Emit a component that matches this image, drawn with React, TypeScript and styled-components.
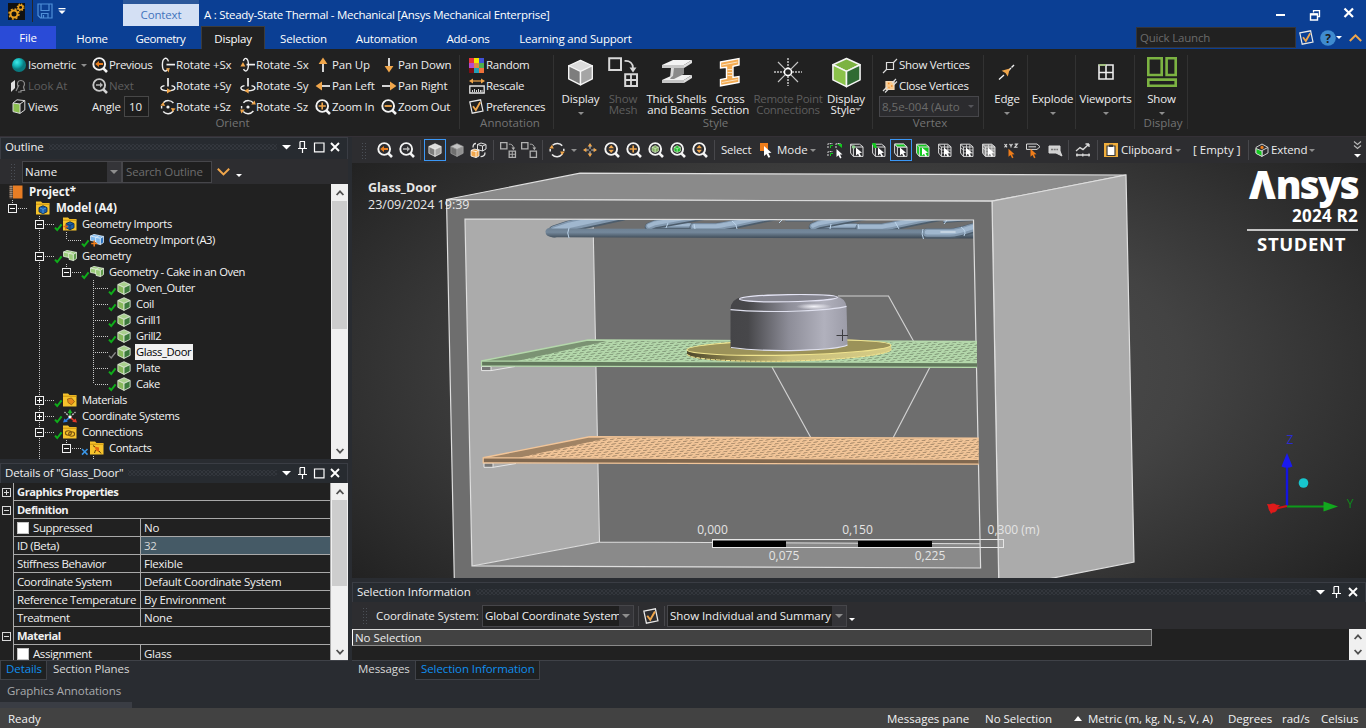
import React from 'react';
import styled, { createGlobalStyle, css } from 'styled-components';

const Global = createGlobalStyle`
  *{box-sizing:border-box}
  body{margin:0;background:#292c31;overflow:hidden}
`;
const UI = '"Open Sans","Noto Sans",sans-serif';

/* ---------- shared pieces ---------- */
const Page = styled.div`
  width:1366px;height:728px;display:flex;flex-direction:column;overflow:hidden;
  font:11.5px/16px ${UI};color:#ececec;background:#292c31;white-space:nowrap;cursor:default;
`;
const Svg = styled.svg`flex:none;display:block;overflow:visible;`;
const Text = styled.span<{ $w?: number; $ls?: number; $b?: boolean }>`
  flex:none;display:block;
  ${p => p.$w && css`width:${p.$w}px;`}
  letter-spacing:${p => p.$ls || 0}px;
  ${p => p.$b && css`font-weight:700;`}
`;
const Space = styled.div<{ $w?: number }>`${p => (p.$w ? css`width:${p.$w}px;flex:none;` : css`flex:1;`)}`;
const Caret = styled.i<{ $c?: string; $s?: number }>`
  flex:none;display:block;width:0;height:0;border:${p => p.$s || 3}px solid transparent;border-bottom:0;
  border-top:${p => (p.$s || 3) + 0.5}px solid ${p => p.$c || '#8e8e8e'};
`;

/* ---------- icons ---------- */
const OR = '#f0a64b';
type LensKind = 'prev' | 'next' | 'plus' | 'minus' | 'ud' | 'cube' | 'green';
const Lens = ({ k, dim }: { k: LensKind; dim?: boolean }) => (
  <Svg width="16" height="16" fill="none">
    <circle cx="7.2" cy="7" r="5.9" stroke={dim ? '#c9c9c9' : '#f4f4f4'} strokeWidth="1.9" />
    <path d="M11.3 11.3 L15 15" stroke={dim ? '#d5d5d5' : '#f4f4f4'} strokeWidth="2.6" />
    {k === 'prev' && <path d="M3.2 7 L7 4 V6 H11 V8 H7 V10 Z" fill="#e87d1e" />}
    {k === 'next' && <path d="M11 7 L8 4.2 V6.3 H4 V7.7 H8 V9.8 Z" fill="#b5b5b5" />}
    {k === 'plus' && <path d="M7.2 3.4 V10.6 M3.6 7 H10.8" stroke={OR} strokeWidth="1.6" />}
    {k === 'minus' && <path d="M3.6 7 H10.8" stroke={OR} strokeWidth="1.8" />}
    {k === 'ud' && <path d="M7.2 3 L10 6.3 H4.4 Z M7.2 11 L10 7.8 H4.4 Z" fill={OR} />}
    {(k === 'cube' || k === 'green') && (
      <>
        <path d="M7.2 3.6 L10.4 5.2 V9 L7.2 10.6 L4 9 V5.2 Z" fill={k === 'green' ? '#19c22a' : '#7fae5c'} stroke="#cfe3bf" strokeWidth=".7" />
        <path d="M4 5.2 L7.2 6.6 L10.4 5.2 M7.2 6.6 V10.6" stroke="#dcebd0" strokeWidth=".7" />
      </>
    )}
  </Svg>
);
const Cube = ({ s = 14, t = '#dcdcdc', l = '#7d7d7d', r = '#a5a5a5', e = '#f5f5f5', sw = 0.8 }) => (
  <Svg width={s} height={s} viewBox="0 0 16 16" strokeLinejoin="round" stroke={e} strokeWidth={sw}>
    <path d="M8 .8 L15 4 L8 7.4 L1 4 Z" fill={t} />
    <path d="M1 4 L8 7.4 V15.3 L1 11.8 Z" fill={l} />
    <path d="M15 4 L8 7.4 V15.3 L15 11.8 Z" fill={r} />
  </Svg>
);
const BodyCube = () => <Cube s={14} t="#a9d08e" l="#86b85a" r="#3c7a3c" e="#dfe9d8" sw={1} />;
const RotAxis = ({ k, neg }: { k: 'x' | 'y' | 'z'; neg?: boolean }) => (
  <Svg width="16" height="16" fill="none" stroke="#f0f0f0" strokeWidth="1.4">
    {k === 'x' && (
      <>
        <path d={neg ? 'M3.4 4 C4.6 -.2 8.4 .4 8.4 7.6 C8.4 14.8 5 15.4 3.6 12' : 'M8.4 4.4 C7.2 -.6 2.4 .4 2.4 7.8 C2.4 15 6.4 15.6 8 11.4'} />
        <path d="M6.5 7.6 H15" strokeWidth="1.7" />
        <path d={neg ? 'M.4 9.5 L3 5 L5.4 9.5 Z' : 'M6 11.5 L8.6 15.6 L9.8 11 Z'} fill={OR} stroke="none" />
      </>
    )}
    {k === 'y' && (
      <>
        <path d="M4.5 7.6 C-1 8.5 -.5 12.5 8 12.8 C16.5 12.5 16.5 8.5 11.5 7.6" />
        <path d="M8 0 V8.6" strokeWidth="1.7" />
        <path d={neg ? 'M8.6 10.2 L4.4 12.8 L8.6 15.6 Z' : 'M7 10.2 L11.4 12.8 L7 15.6 Z'} fill={OR} stroke="none" />
      </>
    )}
    {k === 'z' && (
      <>
        <path d="M3.4 3.8 C6 .8 11 .8 13.4 4 M13.4 12 C10.6 15.4 6 15.6 3.2 12.6 M1.6 9.5 V7" />
        <circle cx="8" cy="8" r="1.6" fill="#f0f0f0" stroke="none" />
        <path d={neg ? 'M11.2 5.6 H15.8 L14.6 1.6 Z' : 'M.4 6.6 L3.4 3 L5 7 Z'} fill={OR} stroke="none" />
        <path d={neg ? 'M4.8 10.6 H.2 L1.4 14.6 Z' : 'M15.6 9.4 L12.6 13 L11 9 Z'} fill={OR} stroke="none" />
      </>
    )}
  </Svg>
);
const Arrow = ({ a }: { a: number }) => (
  <Svg width="16" height="16">
    <g transform={`rotate(${a} 8 8)`}>
      <path d="M8 6.5 V15" stroke="#f5f5f5" strokeWidth="1.7" />
      <path d="M8 .6 L12.4 7 H3.6 Z" fill={OR} />
    </g>
  </Svg>
);
const Check = ({ s = 15 }) => (
  <Svg width={s} height={s} viewBox="0 0 15 15" fill="none">
    <path d="M.8 2.9 L11.6 .8 L14 12 L3.2 14.2 Z" stroke="#e8e8e8" strokeWidth="1.2" />
    <path d="M4 7.3 L6.8 11 L11.2 3.2" stroke={OR} strokeWidth="1.8" />
  </Svg>
);
const Palette = () => {
  const c = ['#e8343a', '#f3e800', '#3f51d8', '#b44bd0', '#e08a45', '#4caf50', '#7d0f14', '#20a0b8', '#f0713a'];
  return (
    <Svg width="15" height="15" shapeRendering="crispEdges">
      {c.map((f, n) => <rect key={f} x={(n % 3) * 5} y={Math.floor(n / 3) * 5} width="5" height="5" fill={f} />)}
    </Svg>
  );
};
const RescaleIcon = () => (
  <Svg width="16" height="16" fill="none">
    <path d="M2 3 H14" stroke={OR} strokeWidth="1.2" />
    <path d="M0 3 L4 .5 V5.5 Z M16 3 L12 .5 V5.5 Z" fill={OR} />
    <path d="M.8 8 H15.2 V15 H.8 Z" stroke="#e6e6e6" strokeWidth="1.3" />
    <path d="M3.5 14 V12 M5.5 14 V11 M7.5 14 V12 M9.5 14 V11 M11.5 14 V12 M13 14 V12" stroke="#e6e6e6" strokeWidth=".9" />
  </Svg>
);
const LookAtIcon = () => (
  <Svg width="16" height="14" fill="none" stroke="#8c8c8c" strokeWidth="1.2">
    <path d="M1 4 L5 1 V9 L1 13 Z" fill="#e0e0e0" stroke="none" />
    <path d="M8 8 C6.5 4 8 1.5 11 1.5 C14.5 1.5 15.5 5 13.5 8 L14.5 11.5 H11 V13 H8 M6 12 L9 6" />
  </Svg>
);
const ViewsIcon = () => (
  <Svg width="14" height="15" fill="none" stroke="#d8d8d8" strokeWidth="1">
    <path d="M1 4 L8 5 V14.4 L1 12.6 Z" fill="#8bbf4f" />
    <path d="M1 4 L5 .8 L12.8 1.6 L8 5 M12.8 1.6 V11 L8 14.4" />
  </Svg>
);
const Dim2 = ({ c = '#d8d8d8', s = 30, flip = false }) => (
  <Svg width={s} height={s} viewBox="0 0 30 30" fill="none" stroke={c}>
    <path d="M1.2 1.2 H13 V13 H1.2 Z" strokeWidth={s > 20 ? 2 : 2.4} />
    <path d="M17.2 17.2 H29 V29 H17.2 Z" strokeWidth={s > 20 ? 2 : 2.4} />
    {!flip && <path d="M23 17 V29 M17 23 H29" strokeWidth="1.8" />}
    <path d="M16.5 4 C22 3.5 25 6.5 25 11" strokeWidth="1.7" />
    <path d="M21.5 10.5 H28.5 L25 15.5 Z" fill={c} stroke="none" />
  </Svg>
);
const BeamIcon = () => (
  <Svg width="30" height="24">
    <path d="M0 20 L11 15 H30 L22 20 Z" fill="#f0f0f0" />
    <path d="M0 20 H22 V23 H0 Z" fill="#c4c4c4" />
    <path d="M22 20 L30 15 V18 L22 23 Z" fill="#dcdcdc" />
    <path d="M10 8 H22 V14 L12 19 H8 L10 16 Z" fill="#8a8a8a" />
    <path d="M9 8 H12 L11 16 L8 18 Z" fill="#d8d8d8" />
    <path d="M0 5 L11 0 H30 L22 5 Z" fill="#f4f4f4" />
    <path d="M0 5 H22 V8 H0 Z" fill="#c9c9c9" />
    <path d="M22 5 L30 0 V3 L22 8 Z" fill="#dedede" />
  </Svg>
);
const CrossSectionIcon = () => (
  <Svg width="20" height="30">
    <path d="M.5 5 L19 1.5 V8 L13 9.4 V20.4 L19 19.5 V25.5 L.5 28.8 V22.5 L6.5 21.4 V10.2 L.5 11 Z" fill="#f3ab52" stroke="#fff" strokeWidth="1.4" />
    <path d="M2 8 L17.500 5 M7.5 12.5 H12 M7.5 15.5 H12 M7.5 18.5 H12 M2 25.5 L17.500 22.5" stroke="#fbe3c2" strokeWidth="1" />
  </Svg>
);
const BurstIcon = () => (
  <Svg width="28" height="28" fill="none" stroke="#c4c4c4" strokeWidth="1.2">
    <circle cx="14" cy="14" r="3.6" stroke="#fff" strokeWidth="1.6" />
    <path d="M14 0 V10 M14 18 V28 M0 14 H10 M18 14 H28" strokeDasharray="2 1" strokeWidth="1.5" />
    <path d="M4 4 L11.3 11.3 M24 4 L16.7 11.3 M4 24 L11.3 16.7 M24 24 L16.7 16.7" />
  </Svg>
);
const VertexIcon = ({ close }: { close?: boolean }) => (
  <Svg width="15" height="15" fill="none" stroke="#dcdcdc" strokeWidth="1.2">
    {close ? (
      <>
        <path d="M3 3.5 H11 V11.5 H3 Z" fill="#f9c98d" stroke="#f7d9b4" />
        <path d="M0 13 L4 9 M2 14.5 L5.5 11 M9 5 L13 1 M10.500 7 L14 3.500" />
        <path d="M5 5.5 h1.5 M8 8 h1.5 M5.5 9.5 h1" stroke="#f08c2a" strokeWidth="1.4" />
      </>
    ) : (
      <>
        <path d="M3.5 4.5 H10.5 V11.5 H3.5 Z" />
        <path d="M10.5 4.5 L14 1 M3.5 11.5 L0 15" />
      </>
    )}
  </Svg>
);
const EdgeIcon = () => (
  <Svg width="16" height="16">
    <path d="M0 15.5 L5 11 M9.5 6.5 L12 4" stroke="#f0f0f0" strokeWidth="1.4" />
    <path d="M12.5 3.5 L15 1" stroke="#f0f0f0" strokeWidth="1.4" />
    <path d="M2.6 6.8 L10.8 4.6 L8.8 12.6 L6.5 9 Z" fill={OR} />
  </Svg>
);
const ViewportsIcon = () => (
  <Svg width="16" height="16" fill="none" stroke="#ececec" strokeWidth="1.6">
    <path d="M1 1 H15 V15 H1 Z M8 1 V15 M1 8.5 H15" />
    <path d="M1 1 H8" stroke="#8bc34a" strokeWidth="1" />
  </Svg>
);
const ShowIcon = () => (
  <Svg width="30" height="30" fill="none" stroke="#7cb342" strokeWidth="2.6">
    <path d="M1.3 1.3 H14.7 V18 H1.3 Z M19.6 1.3 H28.7 V18 H19.6 Z M1.3 22.6 H28.7 V28.7 H1.3 Z" />
  </Svg>
);
const Gears = () => (
  <Svg width="17" height="17">
    <rect width="17" height="17" fill="#111" />
    <circle cx="6" cy="11" r="3.5" fill="none" stroke="#e8a020" strokeWidth="2" />
    <circle cx="6" cy="11" r="5" fill="none" stroke="#e8a020" strokeWidth="1.4" strokeDasharray="2 1.93" />
    <circle cx="12.6" cy="4.4" r="2.2" fill="none" stroke="#e8a020" strokeWidth="1.5" />
    <circle cx="12.6" cy="4.4" r="3.3" fill="none" stroke="#e8a020" strokeWidth="1.2" strokeDasharray="1.4 1.2" />
  </Svg>
);
const Floppy = () => (
  <Svg width="16" height="16" fill="none" stroke="#4f8fd8" strokeWidth="1.2">
    <path d="M1 1 H15 V15 H3.5 L1 12.5 Z M4 1 V7.5 H12 V1 M4.5 15 V10.5 H11 V15 M6.5 12 V15" />
  </Svg>
);
const RingIcon = () => (
  <Svg width="16" height="16" fill="none" stroke="#ededed" strokeWidth="1.5">
    <path d="M3.6 3.2 C6.4 .6 11 .8 13.2 3.8 M13.4 12 C10.6 15.4 6 15.6 3 12.4 M1.2 9.4 V7 M14.8 9 V6.8" />
    <path d="M.2 6.400 L3 2.800 L4.800 6.600 Z M15.800 9.600 L13 13.200 L11.200 9.400 Z" fill={OR} stroke="none" />
  </Svg>
);
const PanIcon = () => (
  <Svg width="14" height="14" fill={OR}>
    <path d="M7 0 L9.3 3.4 H4.7 Z M7 14 L9.3 10.6 H4.7 Z M0 7 L3.4 4.7 V9.3 Z M14 7 L10.6 4.7 V9.3 Z" />
    <path d="M7 3 V5.8 M7 8.2 V11 M3 7 H5.8 M8.2 7 H11" stroke="#bdbdbd" strokeWidth="1.2" />
  </Svg>
);
const Cursor = 'M0 0 L0 8 L2 6.3 L3.6 9.4 L5 8.7 L3.5 5.6 L6 5.4 Z';
type SelKind = 'multi' | 'vert' | 'edge' | 'face' | 'body' | 'node' | 'elf' | 'el' | 'xyz' | 'tag' | 'note' | 'trend';
const SelIcon = ({ k }: { k: SelKind }) => {
  const box = ['vert', 'edge', 'face', 'body', 'node', 'elf', 'el'].includes(k);
  return (
    <Svg width="14" height="14" fill="none" stroke="#dadada" strokeWidth="1">
      {box && (
        <>
          <path d="M.6 1.2 H9.6 L13 3.8 V13.4 H3.4 L.6 10 Z" fill={k === 'body' ? '#12c81e' : k === 'el' ? '#8d8d8d' : '#2d2d30'} />
          <path d="M3.4 4 H13 M3.4 4 V13.4" />
          <path d="M.6 1.2 L3.4 4" stroke={k === 'edge' ? '#12c81e' : '#dadada'} />
        </>
      )}
      {k === 'face' && <path d="M.6 1 H9.6 L13 4 H3.4 Z" fill="#12c81e" />}
      {k === 'edge' && <path d="M0 0 H3.4 L5 5 H2 Z" fill="#12c81e" stroke="none" />}
      {k === 'vert' && <circle cx="3.6" cy="4" r="1.8" fill="#8fd08f" stroke="none" />}
      {(k === 'node' || k === 'elf' || k === 'el') && <path d="M3.4 7 H13 M3.4 10 H13 M6.5 1.4 V13 M9.8 1.4 V13 M1 5 L3.4 7" strokeWidth=".8" />}
      {k === 'multi' && (
        <>
          <path d="M0 5 V.6 H5 M8 5 V.6 H13 M0 13 V8.6 H5" strokeDasharray="2 1" />
          <path d="M2.5 5 v-2.5 h2.5 M2.5 13 v-2.5 h2.5" stroke="#12c81e" />
          <path d="M9 1 H14 V5 Z" fill="#12c81e" stroke="none" />
        </>
      )}
      {k === 'note' && <path d="M1 3 H12 V8 L14 13 L8 10 H1 Z" fill="#d0d0d0" />}
      {k === 'note' && <path d="M3 6.5 H10" stroke="#777" strokeWidth="1.6" strokeDasharray="2 .7" />}
      {k === 'trend' && <path d="M0 8 L4 4.6 L7 6.6 L13 1 M13 1 H9.5 M13 1 V4 M0 12 H14 M1 10.4 V13.6 M6.8 10.4 V13.6 M13 10.4 V13.6" strokeWidth="1.3" />}
      {k === 'tag' && <path d="M.5 1 H11 L14 3.7 L11 6.4 H.5 Z M2.5 3.8 H10" />}
      {k === 'xyz' && <path d="M.5 1 L3 4.4 M3 1 L.5 4.4 M5.5 1 L7 2.6 L8.5 1 M7 2.6 V4.5 M10.7 1.1 H13.4 L10.7 4.3 H13.6" strokeWidth="1.1" />}
      {k !== 'note' && k !== 'trend' && (
        <path d={Cursor} transform={k === 'multi' ? 'translate(8.5 6)' : k === 'xyz' || k === 'tag' ? 'translate(4.5 5.8)' : 'translate(6 4.4)'} fill={k === 'xyz' || k === 'tag' ? '#ef7d1a' : '#fff'} stroke="none" />
      )}
    </Svg>
  );
};

/* ---------- title bar ---------- */
const Top = styled.header`height:49px;flex:none;background:#0b3f94;display:flex;flex-direction:column;`;
const TitleRow = styled.div`height:26px;display:flex;align-items:flex-start;padding-left:8px;color:#fff;`;
const PadTop = styled.div<{ $t: number; $l?: number }>`padding:${p => p.$t}px 0 0 ${p => p.$l || 0}px;flex:none;`;
const ContextTab = styled.div`
  width:76px;height:26px;border-top:4px solid #2b579a;background:#d4e0f4;color:#4373bd;
  line-height:22px;text-align:center;letter-spacing:-.15px;
`;
const TitleDivider = styled.div`width:1px;height:22px;background:#26262a;margin:0 4px 0 7px;`;
const Tabs = styled.nav`height:23px;display:flex;`;
const Tab = styled.div<{ $w: number; $k?: 'file' | 'on'; $ml?: number; $ls?: number }>`
  width:${p => p.$w}px;margin-left:${p => p.$ml || 0}px;height:23px;line-height:25px;text-align:center;color:#fff;
  letter-spacing:${p => p.$ls ?? -0.2}px;
  ${p => p.$k === 'file' && css`background:#2a4bd7;line-height:24px;`}
  ${p => p.$k === 'on' && css`background:#212121;border:1px solid #3c3c3c;border-bottom:0;line-height:24px;`}
`;
const Quick = styled.div`
  width:160px;height:21px;margin-top:1px;background:#212121;border:1px solid #34353a;color:#6b6b6b;padding-left:3px;line-height:20px;letter-spacing:-.2px;
`;
const RightTools = styled.div`display:flex;align-items:center;height:23px;padding-left:3px;width:70px;`;

/* ---------- ribbon ---------- */
const Ribbon = styled.section`height:88px;flex:none;background:#212121;display:flex;border-bottom:1px solid #343036;padding-top:6px;`;
const Group = styled.div<{ $w: number; $pl?: number }>`
  width:${p => p.$w}px;height:74px;flex:none;border-right:1px solid #323232;display:flex;flex-direction:column;padding-left:${p => p.$pl || 0}px;
`;
const GroupBody = styled.div`display:flex;height:62px;`;
const GroupName = styled.div<{ $c?: number; $r?: number }>`
  height:12px;line-height:12px;text-align:center;color:#747474;padding-left:${p => p.$c || 0}px;padding-right:${p => p.$r || 0}px;
`;
const Col = styled.div<{ $w: number }>`width:${p => p.$w}px;flex:none;display:flex;flex-direction:column;`;
const Cmd = styled.div<{ $dim?: boolean }>`height:21px;display:flex;align-items:center;color:${p => (p.$dim ? '#5e5e5e' : '#ededed')};`;
const IconSlot = styled.div<{ $w?: number }>`width:${p => p.$w || 16}px;flex:none;display:flex;justify-content:flex-start;`;
const AngleBox = styled.div`width:25px;height:21px;border:1px solid #474747;background:#1d1d1d;line-height:20px;padding-left:4px;`;
const Big = styled.div<{ $w: number; $dim?: boolean }>`
  width:${p => p.$w}px;flex:none;display:flex;flex-direction:column;align-items:center;color:${p => (p.$dim ? '#5e5e5e' : '#ededed')};
`;
const BigIcon = styled.div`height:34px;margin-bottom:4px;width:100%;display:flex;align-items:center;justify-content:center;`;
const BigLine = styled.div<{ $ls?: number; $drop?: boolean }>`
  height:11px;line-height:11px;display:flex;align-items:${p => (p.$drop ? 'flex-end' : 'center')};letter-spacing:${p => p.$ls ?? -0.15}px;
`;
const Combo = styled.div<{ $w: number; $h?: number; $off?: boolean }>`
  width:${p => p.$w}px;height:${p => p.$h || 22}px;flex:none;display:flex;border:1px solid #46464a;background:${p => (p.$off ? '#2b2b2e' : '#1f1f1f')};
  color:${p => (p.$off ? '#6b6b6b' : '#f0f0f0')};line-height:${p => (p.$h || 22) - 2}px;padding-left:2px;
`;
const ComboText = styled.span<{ $ls?: number }>`flex:1;overflow:hidden;letter-spacing:${p => p.$ls || 0}px;`;
const ComboBtn = styled.span<{ $off?: boolean }>`width:14px;flex:none;display:flex;align-items:center;justify-content:center;background:${p => (p.$off ? 'transparent' : '#343438')};`;

const Item = ({ i, t, dim, ls = -0.15, w }: { i: React.ReactNode; t: string; dim?: boolean; ls?: number; w?: number }) => (
  <Cmd $dim={dim}>
    <IconSlot $w={w}>{i}</IconSlot>
    <Text $ls={ls}>{t}</Text>
  </Cmd>
);
const BigBtn = ({ w, icon, a, b, dim, ls, caret }: { w: number; icon?: React.ReactNode; a: string; b?: string; dim?: boolean; ls?: number; caret?: boolean }) => (
  <Big $w={w} $dim={dim}>
    <BigIcon>{icon}</BigIcon>
    <BigLine $ls={ls}>{a}</BigLine>
    <BigLine $ls={ls} $drop={!b}>{b}{caret && <Caret />}</BigLine>
  </Big>
);

const RibbonBar = () => (
  <Ribbon>
    <Group $w={460} $pl={10}>
      <GroupBody>
        <Col $w={82}>
          <Cmd>
            <Space $w={2} />
            <IconSlot>
              <Svg width="14" height="14">
                <defs><radialGradient id="ball" cx=".35" cy=".3"><stop offset="0" stopColor="#3fe8e8" /><stop offset=".6" stopColor="#14b5b8" /><stop offset="1" stopColor="#0a7a80" /></radialGradient></defs>
                <circle cx="7" cy="7" r="7" fill="url(#ball)" />
              </Svg>
            </IconSlot>
            <Text $w={53} $ls={-0.2}>Isometric</Text><Caret />
          </Cmd>
          <Item w={18} i={<LookAtIcon />} t="Look At" dim />
          <Cmd><Space $w={2} /><IconSlot><ViewsIcon /></IconSlot><Text $ls={-0.1}>Views</Text></Cmd>
        </Col>
        <Col $w={68}>
          <Item w={17} i={<Lens k="prev" />} t="Previous" ls={-0.35} />
          <Item w={17} i={<Lens k="next" dim />} t="Next" dim />
          <Cmd><Text $w={32} $ls={-0.25}>Angle</Text><AngleBox>10</AngleBox></Cmd>
        </Col>
        <Col $w={80}>
          <Item i={<RotAxis k="x" />} t="Rotate +Sx" />
          <Item i={<RotAxis k="y" />} t="Rotate +Sy" />
          <Item i={<RotAxis k="z" />} t="Rotate +Sz" />
        </Col>
        <Col $w={75}>
          <Item i={<RotAxis k="x" neg />} t="Rotate -Sx" />
          <Item i={<RotAxis k="y" neg />} t="Rotate -Sy" />
          <Item i={<RotAxis k="z" neg />} t="Rotate -Sz" />
        </Col>
        <Col $w={66}>
          <Item w={17} i={<Arrow a={0} />} t="Pan Up" />
          <Item w={17} i={<Arrow a={-90} />} t="Pan Left" />
          <Item w={17} i={<Lens k="plus" />} t="Zoom In" ls={-0.3} />
        </Col>
        <Col $w={75}>
          <Item w={17} i={<Arrow a={180} />} t="Pan Down" />
          <Item w={17} i={<Arrow a={90} />} t="Pan Right" />
          <Item w={17} i={<Lens k="minus" />} t="Zoom Out" ls={-0.25} />
        </Col>
      </GroupBody>
      <GroupName $r={4}>Orient</GroupName>
    </Group>
    <Group $w={94} $pl={9}>
      <GroupBody>
        <Col $w={84}>
          <Item w={17} i={<Palette />} t="Random" ls={-0.3} />
          <Item w={17} i={<RescaleIcon />} t="Rescale" ls={-0.3} />
          <Item w={17} i={<Check />} t="Preferences" ls={-0.45} />
        </Col>
      </GroupBody>
      <GroupName $r={2}>Annotation</GroupName>
    </Group>
    <Group $w={319} $pl={5}>
      <GroupBody>
        <BigBtn w={43} icon={<Cube s={27} />} a="Display" caret />
        <BigBtn w={42} icon={<Dim2 />} a="Show" b="Mesh" dim />
        <BigBtn w={65} icon={<BeamIcon />} a="Thick Shells" b="and Beams" />
        <BigBtn w={42} icon={<CrossSectionIcon />} a="Cross" b="Section" />
        <BigBtn w={74} icon={<BurstIcon />} a="Remote Point" b="Connections" dim ls={-0.3} />
        <BigBtn w={42} icon={<Cube s={31} t="#7cb342" l="#8bc34a" r="#2f6b33" />} a="Display" b="Style" caret />
      </GroupBody>
      <GroupName>Style</GroupName>
    </Group>
    <Group $w={111} $pl={6}>
      <GroupBody>
        <Col $w={100}>
          <Cmd><Space $w={4} /><IconSlot><VertexIcon /></IconSlot><Text $ls={-0.3}>Show Vertices</Text></Cmd>
          <Cmd><Space $w={4} /><IconSlot><VertexIcon close /></IconSlot><Text $ls={-0.35}>Close Vertices</Text></Cmd>
          <Combo $w={100} $h={21} $off><ComboText>8,5e-004 (Auto</ComboText><ComboBtn $off><Caret $c="#55555a" /></ComboBtn></Combo>
        </Col>
      </GroupBody>
      <GroupName $r={2}>Vertex</GroupName>
    </Group>
    <Group $w={44}><BigBtn w={46} icon={<EdgeIcon />} a="Edge" caret /></Group>
    <Group $w={48}><BigBtn w={49} a="Explode" caret /></Group>
    <Group $w={59}><BigBtn w={59} icon={<ViewportsIcon />} a="Viewports" caret /></Group>
    <Group $w={53}>
      <GroupBody><BigBtn w={53} icon={<ShowIcon />} a="Show" caret /></GroupBody>
      <GroupName $c={4}>Display</GroupName>
    </Group>
  </Ribbon>
);

/* ---------- panels ---------- */
const Main = styled.main`height:571px;flex:none;display:flex;`;
const Left = styled.aside`width:352px;flex:none;display:flex;flex-direction:column;`;
const Right = styled.section`width:1014px;flex:none;display:flex;flex-direction:column;`;
const PanelHead = styled.div<{ $w?: number; $h?: number; $mt?: number; $pb?: number; $pr?: number; $ls?: number }>`
  width:${p => p.$w || 348}px;height:${p => p.$h || 22}px;margin-top:${p => p.$mt || 0}px;flex:none;display:flex;align-items:center;
  border:1px solid #3a3d44;border-bottom:0;background:#272b30;padding:0 ${p => p.$pr ?? 6}px ${p => p.$pb || 0}px 4px;color:#f0f0f0;
`;
const Texture = styled.div`
  flex:1;height:6px;margin:0 4px 0 5px;
  background-image:radial-gradient(#4b4f56 30%,transparent 35%),radial-gradient(#4b4f56 30%,transparent 35%);
  background-size:4px 4px;background-position:0 0,2px 2px;opacity:.35;
`;
const HeadIcons = ({ only }: { only?: boolean }) => (
  <Svg width={only ? 43 : 60} height="14" fill="none" stroke="#fff">
    <path d="M1 5 H10 L5.5 9.4 Z" fill="#fff" stroke="none" />
    <path d="M19 1.5 V8 M23.5 1.5 V8 M19 1.5 H24 M17 8.5 H26 M21.5 8.5 V13" strokeWidth="1.2" />
    {!only && <path d="M33.5 3 H43 V11.8 H33.5 Z M33 3 H43.5" strokeWidth="1.2" />}
    <path d={only ? 'M34 3 L42 11 M42 3 L34 11' : 'M50 3 L58 11 M58 3 L50 11'} strokeWidth="1.9" />
  </Svg>
);
const Grip = styled.div`
  width:7px;height:17px;flex:none;background-image:radial-gradient(#4b4f56 35%,transparent 40%);background-size:3px 3px;
`;
const PanelBar = styled.div<{ $h: number; $w: number }>`
  height:${p => p.$h}px;width:${p => p.$w}px;flex:none;background:#2d2d30;display:flex;align-items:center;
`;
const VSep = styled.div<{ $m?: number }>`width:1px;height:20px;flex:none;background:#47474b;margin:0 ${p => p.$m || 2}px;`;
const SearchBox = styled.div`width:90px;height:22px;border:1px solid #46464a;background:#1f1f1f;color:#6d6d6d;line-height:20px;padding-left:3px;overflow:hidden;letter-spacing:-.15px;`;
const SmallDown = styled.div`padding-top:8px;`;

const Body = styled.div<{ $h: number }>`
  width:348px;height:${p => p.$h}px;flex:none;background:#212121;display:flex;justify-content:space-between;overflow:hidden;
`;
const Scroll = styled.div`width:17px;flex:none;background:#f0f0f0;display:flex;flex-direction:column;align-items:center;padding:0 1px;`;
const Thumb = styled.div<{ $h: number }>`width:15px;height:${p => p.$h}px;background:#cdcdcd;flex:none;`;
const ScrollBtn = styled.div<{ $h?: number }>`height:${p => p.$h || 17}px;flex:none;display:flex;align-items:center;`;
const Chev = ({ down }: { down?: boolean }) => (
  <Svg width="8" height="6" fill="none" stroke="#505050" strokeWidth="1.8"><path d={down ? 'M.6 1 L4 4.6 L7.4 1' : 'M.6 5 L4 1.4 L7.4 5'} /></Svg>
);

const Tree = styled.div`width:331px;overflow:hidden;display:flex;flex-direction:column;color:#f4f4f4;`;
const TreeRow = styled.div<{ $b?: boolean }>`
  height:16px;flex:none;display:flex;align-items:center;
  ${p => (p.$b ? css`font-weight:700;` : css`font-size:11.2px;letter-spacing:-.37px;`)}
`;
const TreeLabel = styled.span<{ $sel?: boolean; $ml?: number }>`
  margin-left:${p => p.$ml || (p.$sel ? 4 : 5)}px;line-height:16px;
  ${p => p.$sel && css`background:#f0f0f0;color:#000;padding:0 2px 0 1px;`}
`;
type G = '.' | 'v' | 'T' | 'L' | '-' | '+' | '=';
const Guide = ({ k }: { k: G }) => (
  <Svg width="27" height="16" shapeRendering="crispEdges" fill="none" stroke="#c9c9c9">
    {(k === 'v' || k === 'T') && <path d="M12.5 0 V16" strokeDasharray="1 1" />}
    {(k === '-' || k === '+') && <path d="M12.5 0 V16" strokeDasharray="1 1" />}
    {(k === 'L' || k === '=') && <path d="M12.5 0 V8" strokeDasharray="1 1" />}
    {k !== '.' && k !== 'v' && <path d="M14 8.5 H27" strokeDasharray="1 1" />}
    {'-+='.includes(k) && <path d="M8.5 4.5 H16.5 V12.5 H8.5 Z" fill="#212121" stroke="#f0f0f0" />}
    {'-+='.includes(k) && <path d="M10 8.5 H15" stroke="#fff" />}
    {k === '+' && <path d="M12.5 6 V11" stroke="#fff" />}
  </Svg>
);
type TI = 'model' | 'gimp' | 'imp' | 'geom' | 'body' | 'mat' | 'cs' | 'conn' | 'contact';
const Folder = ({ children }: { children?: React.ReactNode }) => (
  <Svg width="14" height="14">
    <path d="M0 .5 H5 L6.5 2 H13.5 V13.5 H0 Z" fill="#f6c32c" />
    <path d="M0 3.2 H13.5" stroke="#c8930e" strokeWidth="1" />
    {children}
  </Svg>
);
const TreeIcon = ({ k }: { k: TI }) => {
  const blueCube = <path d="M7 4.8 L11 6.6 V10.8 L7 12.8 L3 10.8 V6.6 Z" fill="#1d5fa8" stroke="#0d2f55" strokeWidth=".9" />;
  switch (k) {
    case 'model': return <Folder>{blueCube}<path d="M4 7 L7 8.4 L10 7 M7 8.4 V12.4" stroke="#58a4e8" strokeWidth=".8" fill="none" /></Folder>;
    case 'gimp': return <Folder>{blueCube}<path d="M4 7 L7 8.4 L10 7 M7 8.4 V12.4" stroke="#0d2f55" strokeWidth=".8" fill="none" /><path d="M.5 9.5 H5 M2.7 7 V12.5" stroke="#d96a1a" strokeWidth="1.3" /></Folder>;
    case 'mat': return <Folder><path d="M4.5 6 L8.5 5 L11.5 8.6 L8.5 11.8 L5 9.5 Z" fill="#e88a1a" stroke="#8a5a10" strokeWidth=".8" /></Folder>;
    case 'conn': return <Folder><ellipse cx="5.4" cy="8" rx="3" ry="2.2" fill="none" stroke="#7a5410" strokeWidth="1.1" /><ellipse cx="8.6" cy="9" rx="3" ry="2.2" fill="none" stroke="#7a5410" strokeWidth="1.1" /></Folder>;
    case 'contact': return <Folder><path d="M4.5 5.4 L9 6.4 V11 L6 9.4 Z" fill="#e06a10" /><path d="M3 4.6 L5 6 M9 10 L11 12.4 M4.5 12 L5.5 9" stroke="#5a3a08" strokeWidth="1" /></Folder>;
    case 'body': return <BodyCube />;
    case 'geom': case 'imp': {
      const a = k === 'geom' ? '#9ccc7a' : '#7db8ec', b = k === 'geom' ? '#5f9a4a' : '#2f74c0', e = k === 'geom' ? '#e2efda' : '#dcecfb';
      return (
        <Svg width="14" height="14" stroke={e} strokeWidth=".8" strokeLinejoin="round">
          <path d="M.5 3 L4 1.4 L13.5 3.4 L10.4 5.4 Z" fill={a} />
          <path d="M.5 3 L10.4 5.4 V11.6 L6 10.4 V8.6 L.5 7.4 Z" fill={a} />
          <path d="M13.5 3.4 L10.4 5.4 V11.6 L13.5 9.6 Z" fill={b} />
          <path d="M5.6 4.4 V9 M5.6 4.4 L9 2.6" fill="none" />
          {k === 'imp' && <path d="M1.2 10.6 H7.2 M4.2 7.6 V13.6" stroke="#ef7d1a" strokeWidth="1.5" />}
        </Svg>
      );
    }
    default: return (
      <Svg width="14" height="14" fill="none">
        <path d="M7 8 L1.5 3 M7 8 L12.5 3" stroke="#b8b8b8" strokeWidth="1.4" strokeDasharray="2 1" />
        <path d="M7 8 V3" stroke="#1cb52a" strokeWidth="1.4" /><path d="M7 0 L9.4 4 H4.6 Z" fill="#1cb52a" />
        <path d="M7 8 L3 11.6" stroke="#2f7ee0" strokeWidth="1.6" /><path d="M0 13.6 L1.4 9.4 L4.8 12.8 Z" fill="#2f7ee0" />
        <path d="M7 8 L11 11.6" stroke="#e03a2a" strokeWidth="1.6" /><path d="M14 13.6 L12.6 9.4 L9.2 12.8 Z" fill="#e03a2a" />
        <circle cx="7" cy="8" r="1.5" fill="#fff" />
      </Svg>
    );
  }
};
const Mark = ({ k }: { k?: 'ok' | 'gray' | 'x' }) => (
  <Svg width="9" height="16" fill="none">
    {(k === 'ok' || k === 'gray') && <path d="M1 11.6 L3.2 14 L7.6 8.4" stroke={k === 'ok' ? '#0fae1a' : '#8a8a8a'} strokeWidth={k === 'ok' ? 2 : 1.4} />}
    {k === 'x' && <path d="M1 9 L6.5 14.6 M6.5 9 L1 14.6" stroke="#3b97e8" strokeWidth="1.5" />}
  </Svg>
);
type RowData = { g: string; i: TI; t: string; m?: 'ok' | 'gray' | 'x'; b?: boolean; sel?: boolean };
const rows: RowData[] = [
  { g: '=', i: 'model', t: 'Model (A4)', b: true },
  { g: '.-', i: 'gimp', t: 'Geometry Imports', m: 'ok' },
  { g: '.vL', i: 'imp', t: 'Geometry Import (A3)', m: 'ok' },
  { g: '.-', i: 'geom', t: 'Geometry', m: 'ok' },
  { g: '.v=', i: 'geom', t: 'Geometry - Cake in an Oven', m: 'ok' },
  { g: '.v.T', i: 'body', t: 'Oven_Outer', m: 'ok' },
  { g: '.v.T', i: 'body', t: 'Coil', m: 'ok' },
  { g: '.v.T', i: 'body', t: 'Grill1', m: 'ok' },
  { g: '.v.T', i: 'body', t: 'Grill2', m: 'ok' },
  { g: '.v.T', i: 'body', t: 'Glass_Door', m: 'gray', sel: true },
  { g: '.v.T', i: 'body', t: 'Plate', m: 'ok' },
  { g: '.v.L', i: 'body', t: 'Cake', m: 'ok' },
  { g: '.+', i: 'mat', t: 'Materials', m: 'ok' },
  { g: '.+', i: 'cs', t: 'Coordinate Systems', m: 'ok' },
  { g: '.-', i: 'conn', t: 'Connections', m: 'ok' },
  { g: '.v=', i: 'contact', t: 'Contacts', m: 'x' },
];

const Outline = () => (
  <>
    <PanelHead $pb={4}><Text $ls={-0.1}>Outline</Text><Texture /><HeadIcons /></PanelHead>
    <PanelBar $h={25} $w={348}>
      <Space $w={10} /><Grip /><Space $w={5} />
      <Combo $w={100}><ComboText>Name</ComboText><ComboBtn><Caret $s={4} /></ComboBtn></Combo>
      <SearchBox>Search Outline</SearchBox>
      <Space $w={5} />
      <Svg width="13" height="8" fill="none" stroke={OR} strokeWidth="2"><path d="M.8 .8 L6.5 6.4 L12.2 .8" /></Svg>
      <Space $w={6} /><SmallDown><Caret $c="#fff" /></SmallDown>
    </PanelBar>
    <Body $h={275}>
      <Tree>
        <TreeRow $b>
          <Space $w={9} />
          <Svg width="14" height="14"><path d="M4 .5 H13.5 V13.5 H4 Z" fill="#e87d24" /><path d="M.5 .5 H3.6 V13.5 H.5 Z" fill="#6e5a4a" /><path d="M2 1 V13" stroke="#c9b8a8" strokeWidth="3" strokeDasharray="1 1" opacity=".5" /></Svg>
          <TreeLabel $ml={6}>Project*</TreeLabel>
        </TreeRow>
        {rows.map(r => (
          <TreeRow key={r.t} $b={r.b}>
            {r.g.split('').map((c, n) => <Guide key={n} k={c as G} />)}
            <Mark k={r.m} />
            <TreeIcon k={r.i} />
            <TreeLabel $sel={r.sel} $ml={r.b ? 6 : undefined}>{r.t}</TreeLabel>
          </TreeRow>
        ))}
        <TreeRow><Guide k="." /><Guide k="v" /><Guide k="." /><Guide k="T" /></TreeRow>
      </Tree>
      <Scroll>
        <ScrollBtn><Chev /></ScrollBtn><Thumb $h={128} /><Space /><ScrollBtn><Chev down /></ScrollBtn>
      </Scroll>
    </Body>
  </>
);

/* details grid */
const Grid = styled.div`width:331px;display:flex;flex-direction:column;overflow:hidden;color:#f0f0f0;`;
const GRow = styled.div`height:18px;flex:none;display:flex;`;
const GExp = styled.div`width:13px;flex:none;display:flex;align-items:center;justify-content:center;padding-right:1px;`;
const GHead = styled.div`
  flex:1;border:1px solid #a9a9a9;border-top:0;font-weight:700;font-size:11.2px;padding-left:3px;line-height:17px;letter-spacing:-.47px;
`;
const GName = styled.div`
  width:127px;flex:none;border-left:1px solid #a9a9a9;border-bottom:1px solid #a9a9a9;padding-left:3px;display:flex;align-items:center;line-height:17px;letter-spacing:-.4px;
`;
const GVal = styled.div<{ $hl?: boolean }>`
  flex:1;border:1px solid #a9a9a9;border-top:0;padding-left:3px;line-height:17px;letter-spacing:-.25px;${p => p.$hl && css`background:#455a66;color:#d8d8d8;`}
`;
const GCheck = styled.i`width:12px;height:12px;background:#fff;border:1px solid #c4c4c4;margin-right:4px;`;
const Exp = ({ plus }: { plus?: boolean }) => (
  <Svg width="9" height="9" shapeRendering="crispEdges" fill="none" stroke="#d8d8d8"><path d="M.5 .5 H8.5 V8.5 H.5 Z M2 4.5 H7" />{plus && <path d="M4.5 2 V7" />}</Svg>
);
const details: [string, string?, string?][] = [
  ['+Graphics Properties'], ['-Definition'], ['Suppressed', 'No', 'c'], ['ID (Beta)', '32', 'h'], ['Stiffness Behavior', 'Flexible'],
  ['Coordinate System', 'Default Coordinate System'], ['Reference Temperature', 'By Environment'], ['Treatment', 'None'], ['-Material'], ['Assignment', 'Glass', 'c'],
];
const BottomTabs = styled.div<{ $w: number }>`width:${p => p.$w}px;height:20px;flex:none;border-top:1px solid #3f4248;display:flex;color:#d8d8d8;`;
const BTab = styled.div<{ $on?: boolean; $w: number; $pl: number }>`
  width:${p => p.$w}px;height:19px;line-height:16px;padding-left:${p => p.$pl}px;flex:none;letter-spacing:-.08px;
  ${p => p.$on && css`background:#1f2122;color:#0f8fef;border:1px solid #3f4248;border-top:0;`}
`;
const Annot = styled.div`height:22px;flex:none;line-height:22px;padding-left:7px;color:#a9abae;letter-spacing:-.08px;`;
const HScroll = styled.div`height:6px;flex:none;width:132px;background:#3a3d44;`;
const Details = () => (
  <>
    <PanelHead $h={20} $mt={4} $pb={2}><Text $ls={-0.2}>Details of "Glass_Door"</Text><Texture /><HeadIcons /></PanelHead>
    <Body $h={177}>
      <Grid>
        {details.map(([n, v, f]) => (
          <GRow key={n}>
            <GExp>{!v && <Exp plus={n[0] === '+'} />}</GExp>
            {!v ? <GHead>{n.slice(1)}</GHead> : (
              <><GName>{f === 'c' && <GCheck />}{n}</GName><GVal $hl={f === 'h'}>{v}</GVal></>
            )}
          </GRow>
        ))}
      </Grid>
      <Scroll><ScrollBtn><Chev /></ScrollBtn><Thumb $h={86} /><Space /><ScrollBtn><Chev down /></ScrollBtn></Scroll>
    </Body>
    <BottomTabs $w={348}><BTab $on $w={47} $pl={5}>Details</BTab><BTab $w={120} $pl={6}>Section Planes</BTab></BottomTabs>
    <Annot>Graphics Annotations</Annot>
    <HScroll />
  </>
);

/* ---------- graphics toolbar ---------- */
const Cell = styled.div<{ $on?: boolean; $w?: number }>`
  width:${p => p.$w || 22}px;height:22px;flex:none;display:flex;align-items:center;justify-content:center;${p => p.$on && css`border:1px solid #3b97f5;`}
`;
const GraphicsBar = () => (
  <PanelBar $h={26} $w={1014}>
    <Space $w={9} /><Grip /><Space $w={6} />
    <Cell><Lens k="prev" /></Cell><Cell><Lens k="next" /></Cell>
    <VSep $m={2} /><Space $w={1} />
    <Cell $on><Cube s={14} /></Cell>
    <Cell><Cube s={14} l="#6f6f6f" t="#c4c4c4" r="#8f8f8f" e="#a5a5a5" /></Cell>
    <Cell>
      <Svg width="16" height="16">
        <path d="M0 8.5 L3 7 L8 8 V14 L5 15.6 L0 14 Z" fill="#f0a64b" stroke="#fff" strokeWidth=".8" />
        <path d="M0 8.5 L5 9.6 L8 8 M5 9.6 V15.6" fill="none" stroke="#fff" strokeWidth=".8" />
        <path d="M6.5 2.5 L10 1 L15 2.5 V7 L11.5 9 L6.5 7.5 Z M6.5 2.5 L11.5 4 L15 2.5 M11.5 4 V9" fill="none" stroke="#dedede" strokeWidth="1" />
        <path d="M2 5.5 C2 2.5 3 1.5 5 1.5 M14 10.5 C14 13 12.5 14.6 9.6 14.6" fill="none" stroke="#dedede" strokeWidth="1.3" />
      </Svg>
    </Cell>
    <VSep $m={3} />
    <Cell $w={21}><Dim2 s={16} c="#b0b0b0" /></Cell><Cell><Dim2 s={16} c="#b0b0b0" flip /></Cell>
    <VSep $m={2} />
    <Space $w={1} /><Cell><RingIcon /></Cell><Cell $w={11}><Caret /></Cell><Cell><PanIcon /></Cell>
    <Cell><Lens k="ud" /></Cell><Cell><Lens k="plus" /></Cell><Cell><Lens k="cube" /></Cell><Cell><Lens k="green" /></Cell><Cell><Lens k="ud" /></Cell>
    <VSep $m={3} />
    <Space $w={3} /><Text $w={39} $ls={-0.25}>Select</Text>
    <Svg width="15" height="14"><path d="M0 0 H8 V8 H0 Z" fill="#ef7d1a" /><path d={Cursor} transform="translate(4 3) scale(1.25)" fill="#fff" /></Svg>
    <Space $w={2} /><Text $w={33}>Mode</Text><Caret /><Space $w={8} />
    <Cell><SelIcon k="multi" /></Cell><Cell><SelIcon k="vert" /></Cell><Cell><SelIcon k="edge" /></Cell><Cell $on><SelIcon k="face" /></Cell>
    <Cell><SelIcon k="body" /></Cell><Cell><SelIcon k="node" /></Cell><Cell><SelIcon k="elf" /></Cell><Cell><SelIcon k="el" /></Cell>
    <Cell><SelIcon k="xyz" /></Cell><Cell><SelIcon k="tag" /></Cell><Cell><SelIcon k="note" /></Cell>
    <VSep $m={2} /><Space $w={1} /><Cell><SelIcon k="trend" /></Cell><VSep $m={3} />
    <Space $w={3} />
    <Svg width="14" height="14"><path d="M0 0 H14 V14 H0 Z" fill="#f0ae3c" /><path d="M3 3 H11 V12.5 H3 Z" fill="#fff" stroke="#3a3a3a" strokeWidth="1.2" /><path d="M5 1.6 H9 V4 H5 Z" fill="#3a3a3a" /></Svg>
    <Space $w={3} /><Text $w={54} $ls={-0.1}>Clipboard</Text><Caret /><Space $w={12} />
    <Text $w={52}>[ Empty ]</Text>
    <VSep $m={3} />
    <Space $w={3} />
    <Svg width="14" height="14" fill="none" stroke="#d0d0d0"><path d="M1 4.4 L7 1 L13 4.4 V10 L7 13.4 L1 10 Z M7 7 V13 M7 7.5 L13 4.4" /><path d="M1 5.5 L7 8 V13.4 L1 10.4 Z" fill="#12c81e" /><circle cx="7" cy="4.4" r="1.6" fill="#ef7d1a" stroke="none" /></Svg>
    <Space $w={2} /><Text $w={38} $ls={-0.1}>Extend</Text><Caret />
    <Space />
    <Svg width="9" height="18" fill="none" stroke="#b8b8b8" strokeWidth="1.2"><path d="M1 .5 L4.5 3.4 L8 .5 M1 4.5 L4.5 7.4 L8 4.5" /><path d="M1 13 H8 L4.5 16.6 Z" fill="#fff" stroke="none" /></Svg>
    <Space $w={4} />
  </PanelBar>
);

/* ---------- 3D view ---------- */
const View = styled.div`
  position:relative;width:1014px;height:415px;flex:none;overflow:hidden;
  background:radial-gradient(ellipse 64% 80% at 50% 50%,#545454 0,#434343 50%,#222 100%);
`;
const Stamp = styled.div`position:absolute;left:16px;top:16px;font-size:12.5px;line-height:17px;color:#e8e8e8;`;
const Logo = styled.div`position:absolute;right:8px;top:-4px;width:112px;display:flex;flex-direction:column;align-items:flex-end;color:#fff;font-weight:700;`;
const LogoName = styled.div`font-size:38.5px;line-height:50px;letter-spacing:-1.7px;display:flex;font-weight:800;`;
const LogoMark = styled.span`letter-spacing:0;`;
const LogoRel = styled.div`font-size:17px;line-height:18px;margin-top:-2px;letter-spacing:.25px;`;
const LogoLine = styled.div`width:111px;height:2px;background:#c4c4c4;margin:4px 0 4px;`;
const LogoEd = styled.div`font-size:18.5px;line-height:18px;padding-right:12px;letter-spacing:.6px;`;

const Grill = ({ c, y0, id }: { c: [string, string, string]; y0: number; id: string }) => (
  <g transform={`translate(0 ${y0})`}>
    <defs>
      <pattern id={id} width="7" height="2.4" patternUnits="userSpaceOnUse" patternTransform="rotate(-6) skewX(-50)">
        <rect width="7" height="2.4" fill={c[0]} /><rect y=".8" x="1" width="4.2" height=".9" fill={c[1]} />
      </pattern>
    </defs>
    <path d="M481.5 361 L588 340 L977 341.5 V362.8 Z" fill={c[1]} />
    <path d="M517 361 L607 341 L977 342 V362.5 Z" fill={`url(#${id})`} />
    <path d="M481.5 361 L588 340 L977 341.5" fill="none" stroke={c[0]} strokeWidth="1.4" />
    <path d="M481.5 361 L977 362.6 V367.4 L481.5 366 Z" fill={c[2]} />
    <path d="M977 362.6 L481.5 361 V366 L977 367.4" fill="none" stroke={c[0]} strokeWidth="1.2" />
  </g>
);
const Tube = ({ d, w = 7 }: { d: string; w?: number }) => (
  <g fill="none" strokeLinecap="round" strokeLinejoin="round">
    <path d={d} stroke="#4d5d6c" strokeWidth={w} />
    <path d={d} stroke="#8298ae" strokeWidth={w * 0.8} transform="translate(0 -.7)" />
    <path d={d} stroke="#a0b7ce" strokeWidth={w * 0.45} transform="translate(0 -1.2)" />
  </g>
);
const Scene = () => (
  <Svg width="1014" height="415" viewBox="352 163 1014 415">
    <defs>
      <linearGradient id="cake"><stop offset="0" stopColor="#454548" /><stop offset=".15" stopColor="#47474a" /><stop offset=".5" stopColor="#8d8d98" /><stop offset=".8" stopColor="#b1b1bd" /><stop offset="1" stopColor="#9c9ca8" /></linearGradient>
      <linearGradient id="rim"><stop offset="0" stopColor="#4e482c" /><stop offset=".2" stopColor="#857c4a" /><stop offset=".5" stopColor="#c9bf7c" /><stop offset="1" stopColor="#d6cc85" /></linearGradient>
      <linearGradient id="bar" x2="0" y2="1"><stop offset="0" stopColor="#6d8092" /><stop offset=".4" stopColor="#74889b" /><stop offset="1" stopColor="#3c4854" /></linearGradient>
      <radialGradient id="shine"><stop offset="0" stopColor="#f2f2f8" /><stop offset="1" stopColor="#f2f2f8" stopOpacity="0" /></radialGradient>
      <clipPath id="opening"><path d="M465 219 L973.5 220 L980.5 568 L472 566 Z" /></clipPath>
    </defs>
    <g stroke="#dedede" strokeWidth="1.2">
      <path d="M446.5 199.5 L580 173.2 L1126 175 L992 201.2 Z" fill="#8a8a8a" />
      <path d="M992 201.2 L1126 175 L1134 562 L1048 579 H998.7 Z" fill="#ababab" />
      <path d="M446.5 199.5 L992 201.2 L998.7 579 H454.3 Z" fill="#6e6e6e" />
    </g>
    <g clipPath="url(#opening)">
      <path d="M465 219 H593 L599.5 542 L472 566 Z" fill="#ababab" />
      <path d="M472 566 L599.5 542 L981 543.8 V568 Z" fill="#8a8a8a" />
      <path d="M593 219 L599.5 542 L472 566 M599.5 542 L981 543.8" fill="none" stroke="#dcdcdc" strokeWidth="1.1" />
      <path d="M838 296 H888.5 L914 342 M772 367 L811 438 M930 367 L893 438" fill="none" stroke="#d0d0d0" strokeWidth="1.2" />
      <Tube d="M786 220.5 H812 M944 222 L978 219.5" w={2} />
      <Tube d="M655 226 H690" w={6} />
      <Tube d="M819 226.5 H856" w={6} />
      <Tube d="M554 231.5 L569 226.5 L622 215" w={12} />
      <Tube d="M649 227 L655 224.5 L708 215" w={8.5} />
      <Tube d="M694 227.5 H716 C730 226 745 221.5 780 215" w={9} />
      <Tube d="M813 227 L819 224.5 L870 215" w={8.5} />
      <Tube d="M860 228 H882 C896 226 911 221.5 948 215" w={9} />
      <path d="M552 228.5 L975 229.5 V238.5 L552 237.3 Q545 236 545.5 231 Q547 227 552 228.5 Z" fill="url(#bar)" />
      <Tube d="M927 233.5 H950 C962 233 968 229 984 225" w={10} />
      <path d="M941 232 h14" stroke="#e4edf5" strokeWidth="1.6" opacity=".7" strokeLinecap="round" />
      <path d="M569 228 Q566.5 233 569 238 M923 229 Q921 234 923.5 239 M961 227 Q967 231 964 236 M732 221 q5 3 5 8 M783 219 l-4 4 M895 222 l4 7 M947 220 l-3 4 M668 223 l-2 5 M694 224 l1 5 M831 224 l-1 5 M858 224 l1 5" fill="none" stroke="#bcd4ea" strokeWidth="1" />
    </g>
    <path d="M465 219 L973.5 220 L980.6 568 L472 566 Z" fill="none" stroke="#dedede" strokeWidth="1.2" />
    <path d="M481.5 366.5 H491 V370.6 H481.5 Z M491 370.6 L515 366.5 M484 463 H493 V467.3 H484 Z M493 467.3 L516 463.5" fill="#777" stroke="#e6e6e6" strokeWidth="1" />
    <Grill id="mesh1" c={['#b4d8ab', '#7b9273', '#62785c']} y0={0} />
    <g transform="translate(1.7 0)"><Grill id="mesh2" c={['#f2c598', '#a08364', '#806850']} y0={96.8} /></g>
    <g transform="rotate(-1.3 789 349)">
      <path d="M687 348 V352 A102 9.5 0 0 0 891 352 V348 Z" fill="url(#rim)" />
      <ellipse cx="789" cy="347.5" rx="102" ry="7.6" fill="#9b9259" stroke="#f0e48f" strokeWidth="1.2" />
      <path d="M687 352 A102 9.5 0 0 0 891 351" fill="none" stroke="#efe391" strokeWidth="1" strokeDasharray="4 1" />
    </g>
    <path d="M730.5 309 V348 Q760 351.5 800 350.3 Q840 349 847.5 345 L846.5 306 Z" fill="url(#cake)" />
    <path d="M730.5 309 Q731 299 742 297 Q790 292 836 296 Q846 298.5 846.5 307 Q810 312.5 770 311.5 Q745 311.5 730.5 309 Z" fill="url(#cake)" />
    <ellipse cx="814" cy="306.5" rx="18" ry="3.2" fill="url(#shine)" />
    <path d="M730.5 309.6 Q760 312.5 800 311 Q835 309.5 846.5 306.4 M731 347.5 Q760 351.5 800 350.3 Q840 349 847.5 345" fill="none" stroke="#dfe0ee" strokeWidth="1.2" />
    <ellipse cx="788.5" cy="298.2" rx="49" ry="3.6" transform="rotate(-1 788 298)" fill="#85858f" stroke="#e4e4f4" strokeWidth="1.1" />
    <path d="M836.5 335.5 H848 M842.5 329.5 V341" stroke="#3c3c40" strokeWidth="1" />
    <g shapeRendering="crispEdges">
      <path d="M712.5 539.5 H1003.5 V547.5 H712.5 Z" fill="none" stroke="#e6e6e6" />
      <path d="M713 541 H786 V547 H713 Z M858 541 H932 V547 H858 Z" fill="#000" />
    </g>
    <g fontFamily={UI} fontSize="12" fill="#e4e4e4" textAnchor="middle">
      <text x="712.5" y="534">0,000</text><text x="857.5" y="534">0,150</text><text x="1013.5" y="534">0,300 (m)</text>
      <text x="784" y="560">0,075</text><text x="930" y="560">0,225</text>
      <text x="1290" y="444" fill="#2b2bd0">Z</text><text x="1350" y="508" fill="#0d8a1a">Y</text>
    </g>
    <path d="M1287 506 V466" stroke="#1414e0" strokeWidth="2.4" /><path d="M1281.5 466.5 L1287 453 L1292.5 466.5 Q1287 469 1281.5 466.5 Z" fill="#1a1af0" />
    <path d="M1287 506.5 H1324" stroke="#0d9a1a" strokeWidth="2" /><path d="M1323.5 501.5 L1338 506.5 L1323.5 511.5 Z" fill="#12a81e" />
    <path d="M1287 506 L1276 508.5" stroke="#d01414" strokeWidth="2" /><path d="M1267 504 L1280 505 L1271 514 Z" fill="#e01a1a" />
    <circle cx="1273" cy="508" r="4.5" fill="#e01a1a" />
    <circle cx="1303.5" cy="483" r="4.8" fill="#17c6ce" />
  </Svg>
);

/* ---------- selection information ---------- */
const SelBody = styled.div`height:31px;width:1014px;flex:none;background:#212121;display:flex;justify-content:space-between;`;
const SelCell = styled.div`width:800px;height:17px;background:#424242;border:1px solid #8a8a8a;border-left-color:#fff;border-top-color:#d8d8d8;line-height:15px;padding-left:2px;letter-spacing:-.05px;`;
const Status = styled.footer`height:20px;flex:none;background:#424242;display:flex;align-items:center;padding-left:8px;color:#f2f2f2;line-height:21px;`;
const UpTri = styled.i`width:0;height:0;border:4px solid transparent;border-top:0;border-bottom:5px solid #fff;margin-right:6px;`;

export default function App() {
  return (
    <Page>
      <Global />
      <Top>
        <TitleRow>
          <PadTop $t={3}><Gears /></PadTop>
          <TitleDivider />
          <PadTop $t={3}><Floppy /></PadTop>
          <PadTop $t={8} $l={5}><Svg width="8" height="6"><path d="M.5 0 H7.5 V1.2 H.5 Z M.5 2.4 H7.5 L4 6 Z" fill="#fff" /></Svg></PadTop>
          <Space $w={57} />
          <ContextTab>Context</ContextTab>
          <PadTop $t={7} $l={5}><Text $ls={-0.28}>A : Steady-State Thermal - Mechanical [Ansys Mechanical Enterprise]</Text></PadTop>
          <Space />
          <PadTop $t={7}>
            <Svg width="90" height="14" fill="none" stroke="#fff">
              <path d="M0 8 H9" strokeWidth="2" />
              <path d="M34.5 7 H41.5 V13 H34.5 Z" strokeWidth="1.4" /><path d="M34.5 7.5 H41.5" strokeWidth="2" /><path d="M37.5 5.5 V3.7 H43.5 V9.5 H42" strokeWidth="1.3" />
              <path d="M68.5 1.5 L77 10 M77 1.5 L68.5 10" strokeWidth="2.2" />
            </Svg>
          </PadTop>
        </TitleRow>
        <Tabs>
          <Tab $w={56} $k="file">File</Tab>
          <Tab $w={60} $ml={6}>Home</Tab>
          <Tab $w={77} $ls={-0.45}>Geometry</Tab>
          <Tab $w={64} $ml={2} $k="on">Display</Tab>
          <Tab $w={77}>Selection</Tab>
          <Tab $w={89}>Automation</Tab>
          <Tab $w={74}>Add-ons</Tab>
          <Tab $w={141}>Learning and Support</Tab>
          <Space />
          <Quick>Quick Launch</Quick>
          <RightTools>
            <Check />
            <Space $w={6} />
            <Svg width="16" height="16"><circle cx="8" cy="8" r="7.8" fill="#3f8bcf" /><text x="8" y="12.5" fontSize="12" fontWeight="700" fontFamily={UI} textAnchor="middle" fill="#1a1a1a">?</text></Svg>
            <Caret $c="#fff" /><Space $w={7} />
            <Svg width="13" height="8" fill="none" stroke={OR} strokeWidth="2"><path d="M.8 7 L6.5 1.4 L12.2 7" /></Svg>
          </RightTools>
        </Tabs>
      </Top>
      <RibbonBar />
      <Main>
        <Left><Outline /><Details /></Left>
        <Right>
          <GraphicsBar />
          <View>
            <Scene />
            <Stamp><Text $b>Glass_Door</Text><Text>23/09/2024 19:39</Text></Stamp>
            <Logo><LogoName><LogoMark>Λ</LogoMark>nsys</LogoName><LogoRel>2024 R2</LogoRel><LogoLine /><LogoEd>STUDENT</LogoEd></Logo>
          </View>
          <PanelHead $w={1014} $h={20} $mt={4} $pb={2} $pr={7}><Text $ls={-0.08}>Selection Information</Text><Texture /><HeadIcons only /></PanelHead>
          <PanelBar $h={27} $w={1014}>
            <Space $w={10} /><Grip /><Space $w={7} />
            <Text $w={106} $ls={-0.1}>Coordinate System:</Text>
            <Combo $w={152}><ComboText $ls={-0.12}>Global Coordinate System</ComboText><ComboBtn><Caret $s={4} /></ComboBtn></Combo>
            <VSep $m={4} /><Check s={16} /><Space $w={3} /><VSep $m={2} />
            <Combo $w={180}><ComboText $ls={-0.05}>Show Individual and Summary</ComboText><ComboBtn><Caret $s={4} /></ComboBtn></Combo>
            <Space $w={2} /><SmallDown><Caret $c="#fff" /></SmallDown>
          </PanelBar>
          <SelBody>
            <SelCell>No Selection</SelCell>
            <Scroll><ScrollBtn $h={15}><Chev /></ScrollBtn><ScrollBtn $h={16}><Chev down /></ScrollBtn></Scroll>
          </SelBody>
          <BottomTabs $w={1014}><BTab $w={63} $pl={6}>Messages</BTab><BTab $on $w={125} $pl={5}>Selection Information</BTab></BottomTabs>
        </Right>
      </Main>
      <Status>
        <Text>Ready</Text><Space />
        <Text $w={98}>Messages pane</Text><Text $w={89}>No Selection</Text><UpTri />
        <Text $w={140}>Metric (m, kg, N, s, V, A)</Text><Text $w={54}>Degrees</Text><Text $w={39}>rad/s</Text><Text $w={45}>Celsius</Text>
      </Status>
    </Page>
  );
}
